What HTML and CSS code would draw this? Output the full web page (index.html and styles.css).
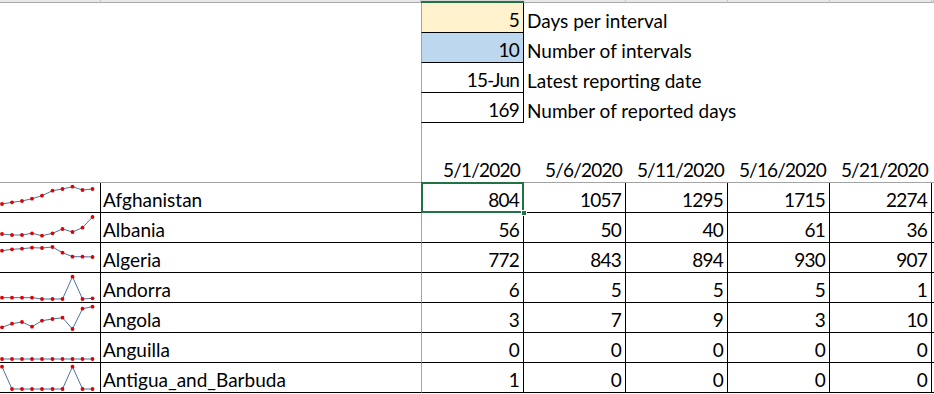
FILE: index.html
```html
<!DOCTYPE html>
<html>
<head>
<meta charset="utf-8">
<link rel="stylesheet" href="styles.css">
</head>
<body>
<div class="sheet">
  <div class="strip">
    <div></div><div></div><div class="hsel"></div><div></div><div></div><div></div><div></div><div></div>
  </div>

  <div class="row">
    <div class="cell"></div><div class="cell"></div>
    <div class="cell num inp fill-y">5</div>
    <div class="cell lbl">Days per interval</div>
    <div class="cell"></div><div class="cell"></div><div class="cell"></div><div class="cell"></div>
  </div>
  <div class="row">
    <div class="cell"></div><div class="cell"></div>
    <div class="cell num inp fill-b">10</div>
    <div class="cell lbl">Number of intervals</div>
    <div class="cell"></div><div class="cell"></div><div class="cell"></div><div class="cell"></div>
  </div>
  <div class="row">
    <div class="cell"></div><div class="cell"></div>
    <div class="cell num inp">15-Jun</div>
    <div class="cell lbl">Latest reporting date</div>
    <div class="cell"></div><div class="cell"></div><div class="cell"></div><div class="cell"></div>
  </div>
  <div class="row">
    <div class="cell"></div><div class="cell"></div>
    <div class="cell num inp">169</div>
    <div class="cell lbl">Number of reported days</div>
    <div class="cell"></div><div class="cell"></div><div class="cell"></div><div class="cell"></div>
  </div>
  <div class="row">
    <div class="cell"></div><div class="cell"></div>
    <div class="cell fz"></div>
    <div class="cell"></div><div class="cell"></div><div class="cell"></div><div class="cell"></div><div class="cell"></div>
  </div>
  <div class="row hdr">
    <div class="cell"></div><div class="cell"></div>
    <div class="cell num fz">5/1/2020</div>
    <div class="cell num">5/6/2020</div>
    <div class="cell num">5/11/2020</div>
    <div class="cell num">5/16/2020</div>
    <div class="cell num">5/21/2020</div>
    <div class="cell"></div>
  </div>

  <div class="row data">
    <div class="cell spark"><svg width="100" height="29" viewBox="0 0 100 29"><polyline points="2,21 12,19.3 22,18 32,15.7 42,12.7 52.5,7.7 62.5,6 72.5,3.7 82.5,7 92.5,6"/><g><circle cx="2" cy="21" r="1.9"/><circle cx="12" cy="19.3" r="1.9"/><circle cx="22" cy="18" r="1.9"/><circle cx="32" cy="15.7" r="1.9"/><circle cx="42" cy="12.7" r="1.9"/><circle cx="52.5" cy="7.7" r="1.9"/><circle cx="62.5" cy="6" r="1.9"/><circle cx="72.5" cy="3.7" r="1.9"/><circle cx="82.5" cy="7" r="1.9"/><circle cx="92.5" cy="6" r="1.9"/></g></svg></div>
    <div class="cell name">Afghanistan</div>
    <div class="cell num fz">804</div>
    <div class="cell num">1057</div>
    <div class="cell num">1295</div>
    <div class="cell num">1715</div>
    <div class="cell num">2274</div>
    <div class="cell"></div>
  </div>
  <div class="row data">
    <div class="cell spark"><svg width="100" height="29" viewBox="0 0 100 29"><polyline points="2,21 12,22 22,22 32,20.3 42,22.7 52.5,20.3 62.5,16 72.5,19 82.5,14.7 92.5,4"/><g><circle cx="2" cy="21" r="1.9"/><circle cx="12" cy="22" r="1.9"/><circle cx="22" cy="22" r="1.9"/><circle cx="32" cy="20.3" r="1.9"/><circle cx="42" cy="22.7" r="1.9"/><circle cx="52.5" cy="20.3" r="1.9"/><circle cx="62.5" cy="16" r="1.9"/><circle cx="72.5" cy="19" r="1.9"/><circle cx="82.5" cy="14.7" r="1.9"/><circle cx="92.5" cy="4" r="1.9"/></g></svg></div>
    <div class="cell name">Albania</div>
    <div class="cell num fz">56</div>
    <div class="cell num">50</div>
    <div class="cell num">40</div>
    <div class="cell num">61</div>
    <div class="cell num">36</div>
    <div class="cell"></div>
  </div>
  <div class="row data">
    <div class="cell spark"><svg width="100" height="29" viewBox="0 0 100 29"><polyline points="2,7.7 12,6.3 22,5.7 32,4.7 42,5 52.5,4 62.5,9.7 72.5,13.7 82.5,13.7 92.5,14"/><g><circle cx="2" cy="7.7" r="1.9"/><circle cx="12" cy="6.3" r="1.9"/><circle cx="22" cy="5.7" r="1.9"/><circle cx="32" cy="4.7" r="1.9"/><circle cx="42" cy="5" r="1.9"/><circle cx="52.5" cy="4" r="1.9"/><circle cx="62.5" cy="9.7" r="1.9"/><circle cx="72.5" cy="13.7" r="1.9"/><circle cx="82.5" cy="13.7" r="1.9"/><circle cx="92.5" cy="14" r="1.9"/></g></svg></div>
    <div class="cell name">Algeria</div>
    <div class="cell num fz">772</div>
    <div class="cell num">843</div>
    <div class="cell num">894</div>
    <div class="cell num">930</div>
    <div class="cell num">907</div>
    <div class="cell"></div>
  </div>
  <div class="row data">
    <div class="cell spark"><svg width="100" height="29" viewBox="0 0 100 29"><polyline points="2,24.7 12,24.7 22,24.7 32,24.7 42,26 52.5,26 62.5,26 72.5,3.7 82.5,26 92.5,25.3"/><g><circle cx="2" cy="24.7" r="1.9"/><circle cx="12" cy="24.7" r="1.9"/><circle cx="22" cy="24.7" r="1.9"/><circle cx="32" cy="24.7" r="1.9"/><circle cx="42" cy="26" r="1.9"/><circle cx="52.5" cy="26" r="1.9"/><circle cx="62.5" cy="26" r="1.9"/><circle cx="72.5" cy="3.7" r="1.9"/><circle cx="82.5" cy="26" r="1.9"/><circle cx="92.5" cy="25.3" r="1.9"/></g></svg></div>
    <div class="cell name">Andorra</div>
    <div class="cell num fz">6</div>
    <div class="cell num">5</div>
    <div class="cell num">5</div>
    <div class="cell num">5</div>
    <div class="cell num">1</div>
    <div class="cell"></div>
  </div>
  <div class="row data">
    <div class="cell spark"><svg width="100" height="29" viewBox="0 0 100 29"><polyline points="2,24.3 12,20.7 22,19 32,23.7 42,17.7 52.5,16 62.5,14.7 72.5,26 82.5,5.7 92.5,3.7"/><g><circle cx="2" cy="24.3" r="1.9"/><circle cx="12" cy="20.7" r="1.9"/><circle cx="22" cy="19" r="1.9"/><circle cx="32" cy="23.7" r="1.9"/><circle cx="42" cy="17.7" r="1.9"/><circle cx="52.5" cy="16" r="1.9"/><circle cx="62.5" cy="14.7" r="1.9"/><circle cx="72.5" cy="26" r="1.9"/><circle cx="82.5" cy="5.7" r="1.9"/><circle cx="92.5" cy="3.7" r="1.9"/></g></svg></div>
    <div class="cell name">Angola</div>
    <div class="cell num fz">3</div>
    <div class="cell num">7</div>
    <div class="cell num">9</div>
    <div class="cell num">3</div>
    <div class="cell num">10</div>
    <div class="cell"></div>
  </div>
  <div class="row data">
    <div class="cell spark"><svg width="100" height="29" viewBox="0 0 100 29"><polyline points="2,26 12,26 22,26 32,26 42,26 52.5,26 62.5,26 72.5,26 82.5,26 92.5,26"/><g><circle cx="2" cy="26" r="1.9"/><circle cx="12" cy="26" r="1.9"/><circle cx="22" cy="26" r="1.9"/><circle cx="32" cy="26" r="1.9"/><circle cx="42" cy="26" r="1.9"/><circle cx="52.5" cy="26" r="1.9"/><circle cx="62.5" cy="26" r="1.9"/><circle cx="72.5" cy="26" r="1.9"/><circle cx="82.5" cy="26" r="1.9"/><circle cx="92.5" cy="26" r="1.9"/></g></svg></div>
    <div class="cell name">Anguilla</div>
    <div class="cell num fz">0</div>
    <div class="cell num">0</div>
    <div class="cell num">0</div>
    <div class="cell num">0</div>
    <div class="cell num">0</div>
    <div class="cell"></div>
  </div>
  <div class="row data">
    <div class="cell spark"><svg width="100" height="29" viewBox="0 0 100 29"><polyline points="2,3.7 12,26 22,26 32,26 42,26 52.5,26 62.5,26 72.5,3.7 82.5,26 92.5,26"/><g><circle cx="2" cy="3.7" r="1.9"/><circle cx="12" cy="26" r="1.9"/><circle cx="22" cy="26" r="1.9"/><circle cx="32" cy="26" r="1.9"/><circle cx="42" cy="26" r="1.9"/><circle cx="52.5" cy="26" r="1.9"/><circle cx="62.5" cy="26" r="1.9"/><circle cx="72.5" cy="3.7" r="1.9"/><circle cx="82.5" cy="26" r="1.9"/><circle cx="92.5" cy="26" r="1.9"/></g></svg></div>
    <div class="cell name">Antigua_and_Barbuda</div>
    <div class="cell num fz">1</div>
    <div class="cell num">0</div>
    <div class="cell num">0</div>
    <div class="cell num">0</div>
    <div class="cell num">0</div>
    <div class="cell"></div>
  </div>

  <div class="sel"><span class="handle"></span></div>
</div>
</body>
</html>
```

FILE: styles.css
```css
html, body {
  margin: 0;
  padding: 0;
  background: #ffffff;
}

body {
  font-family: Lato, "Liberation Sans", sans-serif;
  font-size: 19px;
  color: #000000;
  overflow: hidden;
}

.sheet {
  position: relative;
  width: 934px;
}

.strip,
.row {
  display: grid;
  grid-template-columns: 101px 320px 103px 102px 102px 102px 102px 1fr;
}

.strip {
  height: 3px;
}

.strip > div {
  box-sizing: border-box;
  height: 3px;
  background: #e8e8e8;
  border-bottom: 1px solid #a9a9a9;
  border-right: 1px solid #c6c6c6;
}

.strip > div.hsel {
  background: #d4d4d4;
  border-bottom: 2px solid #217346;
  border-right: none;
}

.cell {
  box-sizing: border-box;
  height: 30px;
  display: flex;
  align-items: flex-end;
  padding: 0 3px 1px 3px;
  line-height: 22px;
  white-space: nowrap;
  min-width: 0;
}

.num {
  justify-content: flex-end;
  letter-spacing: -0.8px;
  padding-right: 4px;
}

.lbl {
  overflow: visible;
  padding-left: 3px;
}

.inp {
  border-left: 1px solid #a3a3a3;
  border-right: 1px solid #000000;
  border-bottom: 1px solid #000000;
}

.fill-y {
  background: #fff2cc;
}

.fill-b {
  background: #bdd7ee;
}

.fz {
  border-left: 1px solid #a3a3a3;
}

.hdr .cell {
  border-bottom: 1px solid #a3a3a3;
}

.data .cell {
  border-bottom: 1px solid #000000;
}

.data .cell.num {
  border-right: 1px solid #000000;
}

.data .cell.spark {
  border-right: 1px solid #000000;
  padding: 0;
  align-items: flex-start;
}

.data .cell.name {
  padding-left: 2px;
}

.spark svg {
  display: block;
}

.spark polyline {
  fill: none;
  stroke: #4f72a0;
  stroke-width: 1;
}

.spark circle {
  fill: #e00000;
}

.sel {
  position: absolute;
  left: 421px;
  top: 182px;
  width: 103px;
  height: 31px;
  box-sizing: border-box;
  border: 2px solid #217346;
}

.handle {
  position: absolute;
  right: -5px;
  bottom: -5px;
  width: 6px;
  height: 6px;
  box-sizing: border-box;
  background: #217346;
  border: 1px solid #ffffff;
}
```
